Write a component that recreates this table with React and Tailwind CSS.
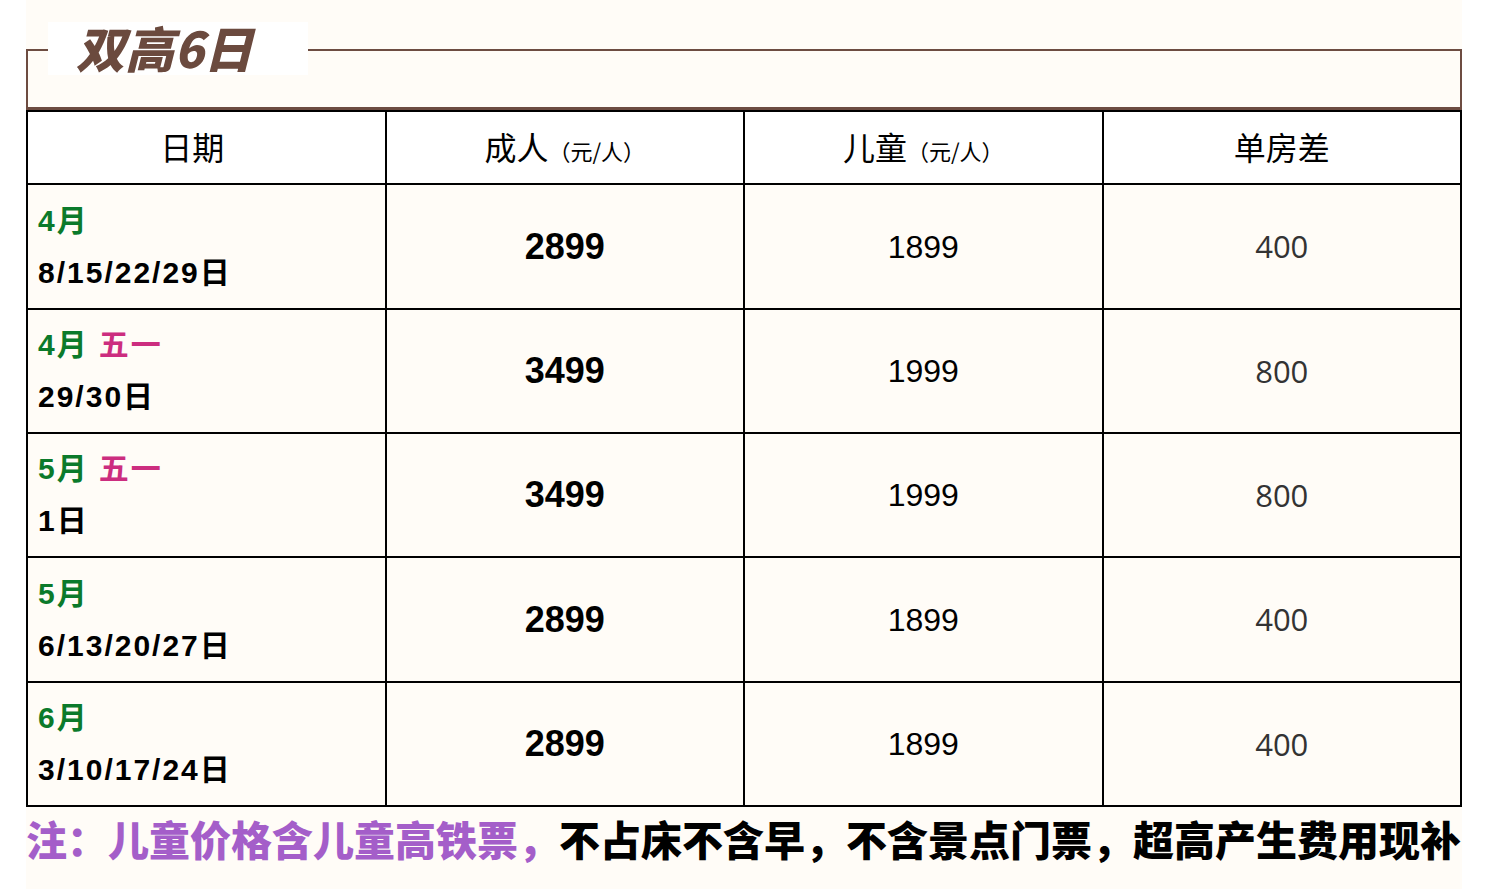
/* eslint-disable */
const rows = [
  { month: '4月', tag: '', days: '8/15/22/29日', adult: '2899', child: '1899', single: '400', tall: true },
  { month: '4月', tag: '五一', days: '29/30日', adult: '3499', child: '1999', single: '800' },
  { month: '5月', tag: '五一', days: '1日', adult: '3499', child: '1999', single: '800' },
  { month: '5月', tag: '', days: '6/13/20/27日', adult: '2899', child: '1899', single: '400', tall: true },
  { month: '6月', tag: '', days: '3/10/17/24日', adult: '2899', child: '1899', single: '400' },
];

const cjk = { fontFamily: '"Noto Sans CJK SC", sans-serif' };
const arial = { fontFamily: '"Liberation Sans", "Noto Sans CJK SC", sans-serif' };

const HeadCell = ({ main, unit, shift }) => (
  <th
    className={`border-2 border-black bg-white font-normal text-black h-[73px] p-0 pb-[4px] ${shift ? 'pr-[28px]' : ''}`}
    style={cjk}
  >
    <span className="text-[32px]">{main}</span>
    {unit && <span className="text-[22px]">（元/人）</span>}
  </th>
);

const App = () => {
  return (
    <div className="bg-white min-h-[889px]">
      <div className="ml-[26px] w-[1436px] bg-[#fffcf7] pt-[49px]">
        <div className="relative h-[61px] border-2 border-b-[3px] border-[#6d4c41]">
          <div className="absolute -top-[29px] left-[20px] w-[260px] h-[53px] bg-white flex items-center pl-[28px] pb-[5px]">
            <span className="text-[49px] font-black italic text-[#6b4a3e] leading-none" style={cjk}>
              双高6日
            </span>
          </div>
        </div>

        <table className="w-full table-fixed border-collapse">
          <thead>
            <tr>
              <HeadCell main="日期" shift />
              <HeadCell main="成人" unit />
              <HeadCell main="儿童" unit />
              <HeadCell main="单房差" />
            </tr>
          </thead>
          <tbody>
            {rows.map((r, i) => (
              <tr key={i} className={r.tall ? 'h-[125px]' : 'h-[124px]'}>
                <td className="border-2 border-black pl-[10px] font-bold text-[30px] tracking-[2px]" style={arial}>
                  <div className="leading-[52px]">
                    <span className="text-[#0b7a2b]">{r.month}</span>
                    {r.tag && <span className="text-[#cc2d7f] ml-[10px]">{r.tag}</span>}
                  </div>
                  <div className="leading-[52px] text-black">{r.days}</div>
                </td>
                <td className="border-2 border-black text-center font-bold text-[36px] text-black" style={arial}>
                  {r.adult}
                </td>
                <td className="border-2 border-black text-center text-[32px] text-black" style={arial}>
                  {r.child}
                </td>
                <td
                  className="border-2 border-black text-center text-[31px] text-[#333333]"
                  style={{ fontFamily: '"Open Sans", sans-serif' }}
                >
                  {r.single}
                </td>
              </tr>
            ))}
          </tbody>
        </table>

        <div className="h-[83px] leading-[62px] whitespace-nowrap text-[41px] font-black" style={cjk}>
          <span className="text-[#a45ec9]">注：儿童价格含儿童高铁票，</span>
          <span className="text-black">不占床不含早，不含景点门票，超高产生费用现补</span>
        </div>
      </div>
    </div>
  );
};

export default App;
